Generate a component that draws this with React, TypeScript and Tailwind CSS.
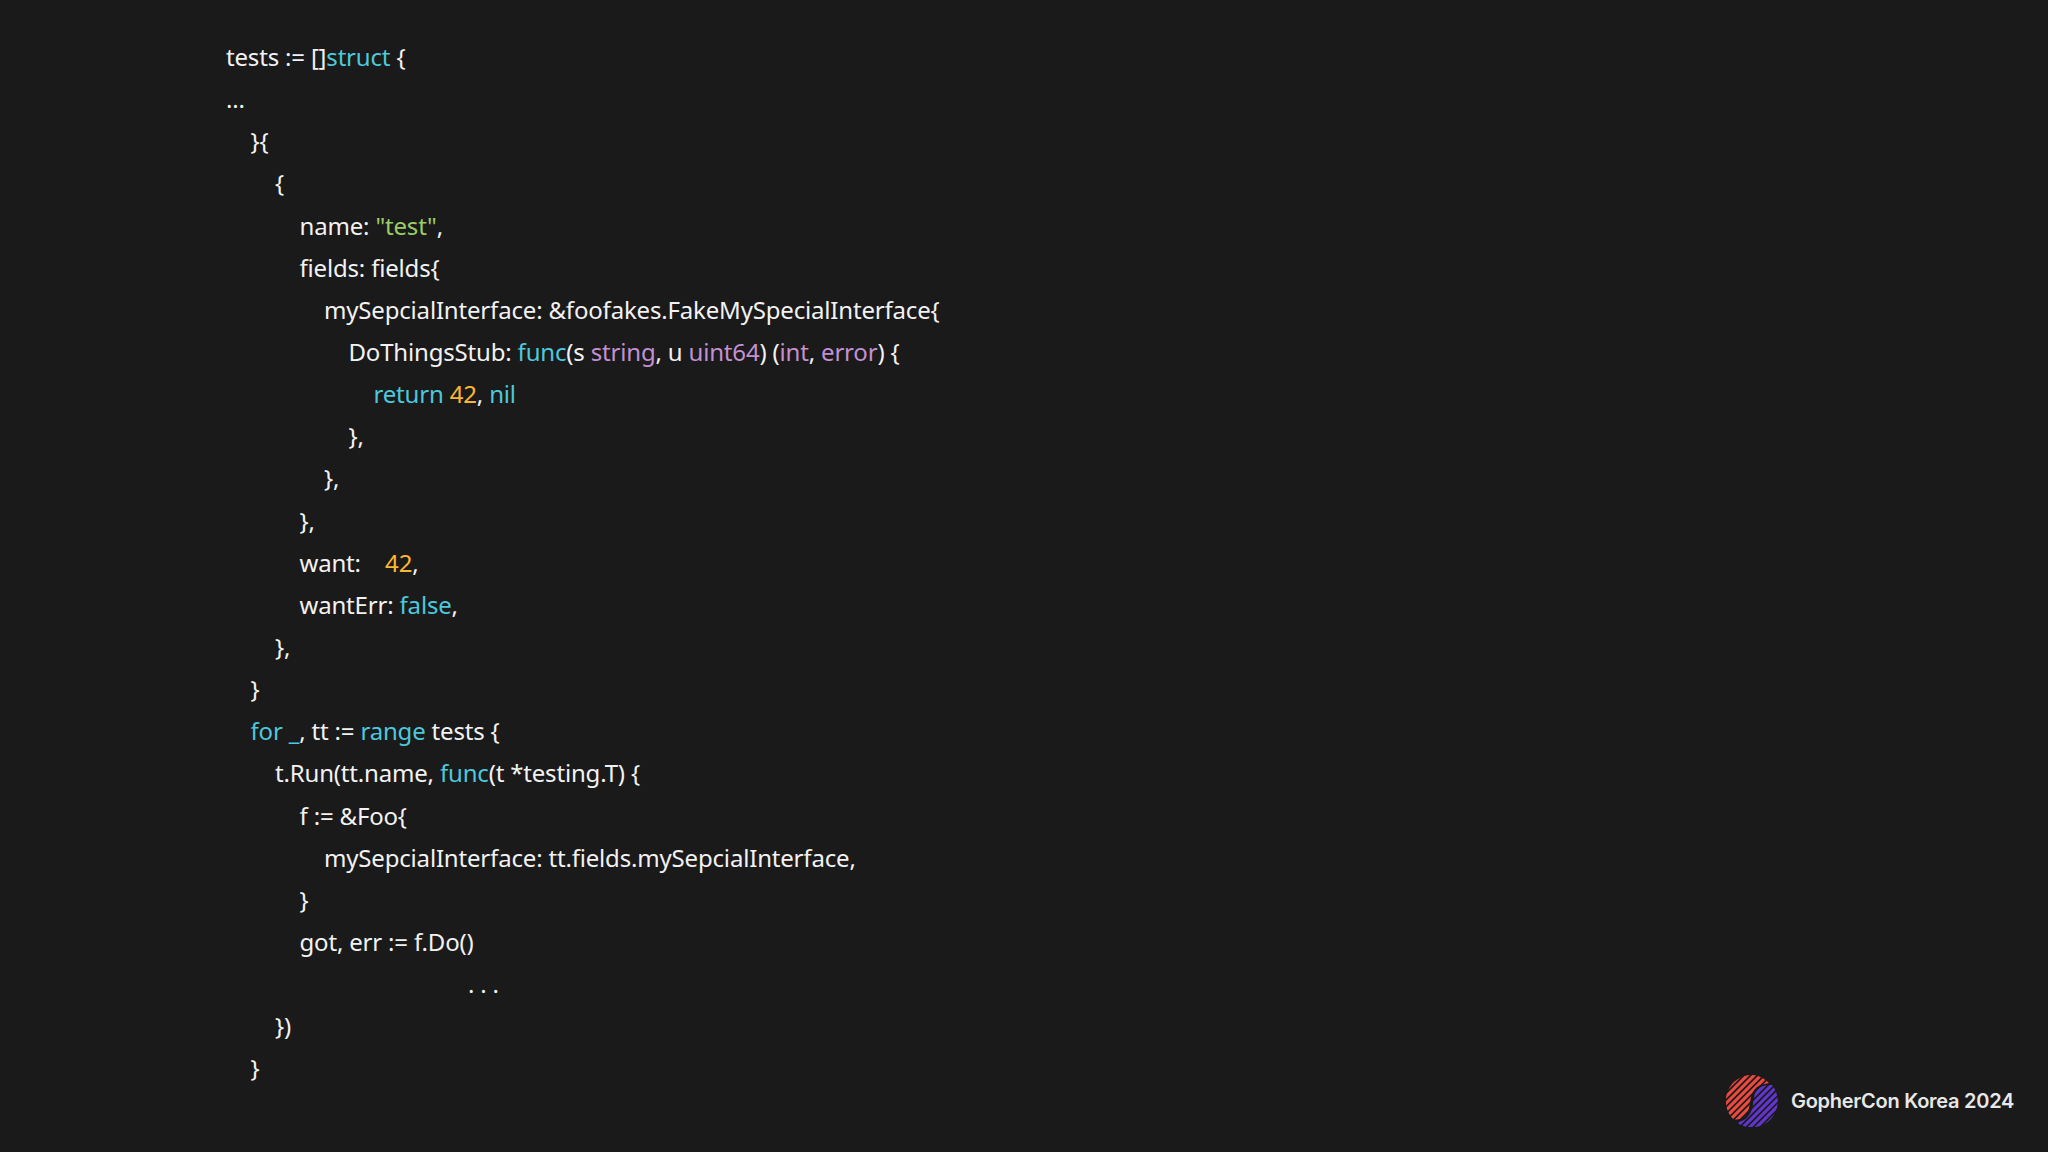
const cyan = "text-[#4dc8dc]";
const purple = "text-[#c490d1]";
const orange = "text-[#fbb732]";
const green = "text-[#9ccc65]";

function Line({ indent = 0, children }: { indent?: number; children?: React.ReactNode }) {
  const pad = ["pl-0", "pl-[24.5px]", "pl-[49px]", "pl-[73.5px]", "pl-[98px]", "pl-[122.5px]", "pl-[147.5px]"][indent];
  return <div className={"h-[42.15px] whitespace-pre " + pad}>{children}</div>;
}

const stripes = Array.from({ length: 24 }, (_, i) => -39 + i * 3.4);

function Logo() {
  return (
    <svg width="52" height="52" viewBox="0 0 52 52" className="shrink-0">
      <defs>
        <clipPath id="red">
          <path d="M43 8 C38 3 32 0 26 0 A26 26 0 0 0 7 44 C14 46 21 42 23 33 C25 25 24 18 31 12 C34 9.5 39 9 43 8 Z" />
        </clipPath>
        <clipPath id="violet">
          <path d="M46 10 C40 10 34 11 31 15 C27 20 28 27 26 34 C23 43 17 47 10 47 A26 26 0 0 0 46 10 Z" />
        </clipPath>
      </defs>
      <g clipPath="url(#red)" stroke="#ea4a40" strokeWidth="3.1">
        {stripes.map((d) => (
          <line key={d} x1={26 + d - 40} y1={26 + d + 40} x2={26 + d + 40} y2={26 + d - 40} />
        ))}
      </g>
      <g clipPath="url(#violet)" stroke="#6236cc" strokeWidth="3.1">
        {stripes.map((d) => (
          <line key={d} x1={26 + d - 40} y1={26 + d + 40} x2={26 + d + 40} y2={26 + d - 40} />
        ))}
      </g>
    </svg>
  );
}

export default function App() {
  return (
    <div className="relative w-[2048px] h-[1152px] overflow-hidden bg-[#1a1a1a] text-[#f2f2f2] pl-[226px] pt-[36px] text-[24px] tracking-[-0.18px] leading-[42px] font-['Noto_Sans',sans-serif]">
      <Line>tests := []<span className={cyan}>struct</span> {"{"}</Line>
      <Line>...</Line>
      <Line indent={1}>{"}{"}</Line>
      <Line indent={2}>{"{"}</Line>
      <Line indent={3}>name: <span className={green}>"test"</span>,</Line>
      <Line indent={3}>fields: fields{"{"}</Line>
      <Line indent={4}>mySepcialInterface: &amp;foofakes.FakeMySpecialInterface{"{"}</Line>
      <Line indent={5}>
        DoThingsStub: <span className={cyan}>func</span>(s <span className={purple}>string</span>, u <span className={purple}>uint64</span>) (<span className={purple}>int</span>, <span className={purple}>error</span>) {"{"}
      </Line>
      <Line indent={6}>
        <span className={cyan}>return</span> <span className={orange}>42</span>, <span className={cyan}>nil</span>
      </Line>
      <Line indent={5}>{"},"}</Line>
      <Line indent={4}>{"},"}</Line>
      <Line indent={3}>{"},"}</Line>
      <Line indent={3}>want:    <span className={orange}>42</span>,</Line>
      <Line indent={3}>wantErr: <span className={cyan}>false</span>,</Line>
      <Line indent={2}>{"},"}</Line>
      <Line indent={1}>{"}"}</Line>
      <Line indent={1}>
        <span className={cyan}>for _</span>, tt := <span className={cyan}>range</span> tests {"{"}
      </Line>
      <Line indent={2}>t.Run(tt.name, <span className={cyan}>func</span>(t *testing.T) {"{"}</Line>
      <Line indent={3}>f := &amp;Foo{"{"}</Line>
      <Line indent={4}>mySepcialInterface: tt.fields.mySepcialInterface,</Line>
      <Line indent={3}>{"}"}</Line>
      <Line indent={3}>got, err := f.Do()</Line>
      <div className="h-[42.15px] pl-[242px]">. . .</div>
      <Line indent={2}>{"})"}</Line>
      <Line indent={1}>{"}"}</Line>
      <div className="absolute left-[1726px] top-[1075px] flex items-center gap-[13px]">
        <Logo />
        <span className="text-[20px] leading-[28px] font-semibold text-[#e8e8e8] font-['Inter',sans-serif] tracking-[-0.27px]">
          GopherCon Korea 2024
        </span>
      </div>
    </div>
  );
}
